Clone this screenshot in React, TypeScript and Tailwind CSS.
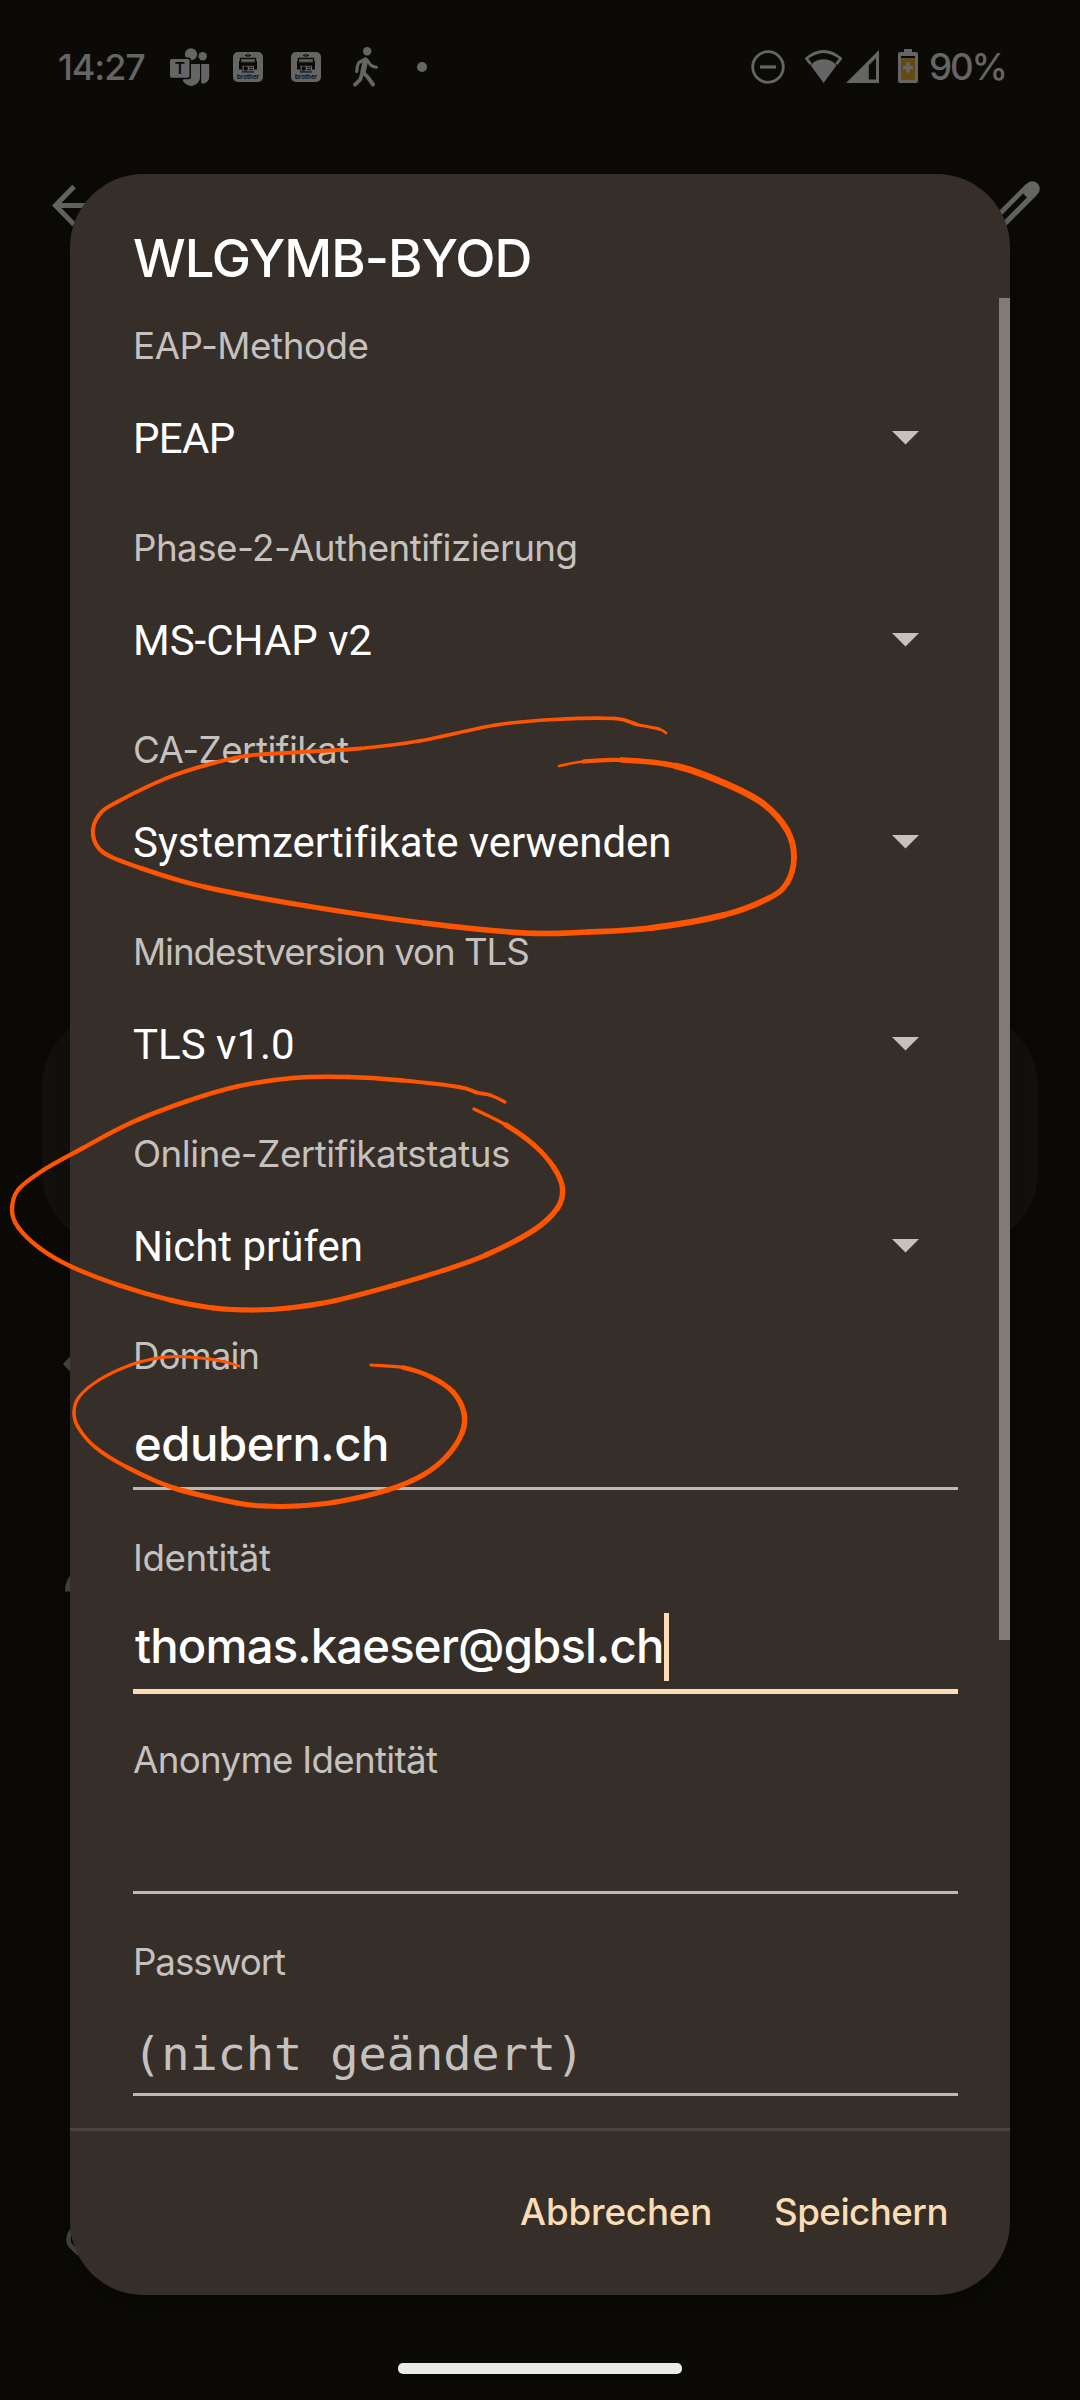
type Pt = [number, number, number];

const LABEL = "font-['Inter'] text-[36.75px] leading-[48px] text-[#c4c1be] whitespace-nowrap";

const selects = [
  { label: "EAP-Methode", ls: "tracking-[-0.45px]", value: "PEAP", vls: "tracking-[-0.7px]" },
  { label: "Phase-2-Authentifizierung", ls: "tracking-[-0.55px]", value: "MS-CHAP v2", vls: "tracking-normal" },
  { label: "CA-Zertifikat", ls: "tracking-[-0.52px]", value: "Systemzertifikate verwenden", vls: "tracking-[-0.05px]" },
  { label: "Mindestversion von TLS", ls: "tracking-[-1.08px]", value: "TLS v1.0", vls: "tracking-normal" },
  { label: "Online-Zertifikatstatus", ls: "tracking-[-0.48px]", value: "Nicht prüfen", vls: "tracking-normal" },
];

function SelectField({ label, ls, value, vls }: { label: string; ls: string; value: string; vls: string }) {
  return (
    <div className="h-[202px] shrink-0">
      <div className={`${LABEL} ${ls}`}>{label}</div>
      <div className="mt-[41px] flex h-14 items-center justify-between pr-[39px]">
        <span className={`font-['Roboto'] text-[42px] leading-[56px] whitespace-nowrap text-white ${vls}`}>{value}</span>
        <svg className="mb-[3px]" width="27" height="14" viewBox="0 0 27 14" fill="#c4c1be">
          <path d="M0 0h27L13.5 13.5z" />
        </svg>
      </div>
    </div>
  );
}

function StatusBar() {
  return (
    <div className="flex h-[134px] items-center pr-[77px] pl-[58px] text-[#656565]">
      <span className="w-[110px] font-['Inter'] text-[36px] leading-[44px] font-medium tracking-[-1.1px]">14:27</span>
      <svg width="44" height="42" viewBox="168 46 44 42" fill="#656565">
        <circle cx="202.7" cy="56.3" r="4.2" />
        <path d="M202 64h6.2q1 0 1 1v11.5q0 6-6 7.2q-2-.3-2-1.5V64z" />
        <circle cx="191" cy="54.3" r="6.1" />
        <path d="M184 64h16v12.500a9 9 0 0 1-17 4.500z" />
        <rect x="168.500" y="57.500" width="22.500" height="21.700" rx="2.500" fill="#0b0a06" />
        <rect x="170" y="59" width="19.500" height="18.700" rx="1.600" />
        <text x="179.800" y="74" textAnchor="middle" fontFamily="Inter" fontWeight="600" fontSize="15.500" fill="#0b0a06">T</text>
      </svg>
      <PrinterIcon className="ml-[20px]" />
      <PrinterIcon className="ml-[26px]" />
      <svg className="ml-[29px]" width="28" height="42" viewBox="350 46 28 42" fill="none" stroke="#656565" strokeLinecap="round" strokeLinejoin="round">
        <circle cx="366.200" cy="51.200" r="4.200" fill="#656565" stroke="none" />
        <path d="M364.500 59l-6.500 3.500q-1.800 2-2.200 9" strokeWidth="3.200" />
        <path d="M364.500 60.500L362 72" strokeWidth="5.500" />
        <path d="M366.500 60.500l3 4.500q2.500 2 6 2.300" strokeWidth="3" />
        <path d="M361.800 72l5.200 5.500l5 7" strokeWidth="4" />
        <path d="M360.800 74.500l-1.500 5l-5.300 5.200" strokeWidth="3.800" />
      </svg>
      <div className="ml-[38px] h-[10px] w-[10px] rounded-full bg-[#656565]" />
      <svg className="ml-auto" width="34" height="36" viewBox="0 0 34 36" fill="none" stroke="#656565" strokeWidth="2.800">
        <circle cx="17" cy="18" r="15.300" />
        <path d="M9 18h16" strokeWidth="3.200" />
      </svg>
      <svg className="ml-[19px]" width="76" height="36" viewBox="804 48 76 36" fill="#656565">
        <path d="M823.600 82L811.500 65.500q-.8-1.400 0-2.200q5-5 12.100-5t12.100 5q.8.800 0 2.200z" />
        <path d="M810.800 63.200l-4.300-5.700q17.100-14 34.200 0l-4.300 5.700" fill="none" stroke="#656565" strokeWidth="2.800" strokeLinejoin="round" />
        <path fillRule="evenodd" d="M879 49v33h-33zM876 57l-7.200 7.200V78.500h7.200z" />
      </svg>
      <svg className="ml-[18px]" width="20" height="36" viewBox="898 48 20 36">
        <path d="M904 48h8v3h4a2 2 0 0 1 2 2v27a2 2 0 0 1-2 2h-16a2 2 0 0 1-2-2V53a2 2 0 0 1 2-2h4z" fill="#656565" />
        <path d="M901 55h14v2h-14z" fill="#0b0a06" />
        <path d="M901 57h14v22h-14z" fill="#654a16" />
        <path d="M903 66.500h10M908 61.500v10" stroke="#656565" strokeWidth="3.400" />
      </svg>
      <span className="ml-[11px] w-[74px] font-['Inter'] text-[36.75px] leading-[44px] font-medium tracking-[-2.2px]">90%</span>
    </div>
  );
}

function PrinterIcon({ className }: { className: string }) {
  return (
    <svg className={className} width="32" height="32" viewBox="0 0 32 32">
      <rect x="1" y="1" width="30" height="30" rx="5" fill="#656565" />
      <path d="M13 4.500q3-1.800 6 0q-3 1.500-6 0z" fill="none" stroke="#0b0a06" strokeWidth="1" />
      <path d="M8.500 10V7.500h15V10" fill="none" stroke="#0b0a06" strokeWidth="1.400" />
      <path d="M7 10h18v8.500h-3v3H10v-3H7z" fill="#0b0a06" />
      <path d="M9 10.800h14" stroke="#656565" strokeWidth="1" />
      <rect x="10.500" y="14.800" width="11.500" height="5.600" fill="#656565" />
      <circle cx="13.700" cy="17.500" r="2.200" fill="#0b0a06" />
      <path d="M17 16.300h4M17 18.600h4" stroke="#0b0a06" strokeWidth="1" />
      <text x="5" y="28" fontFamily="Inter" fontSize="6.800" fontWeight="600" textLength="22" lengthAdjust="spacingAndGlyphs" fill="#0b0a06">brother</text>
    </svg>
  );
}

/* Remains of the settings screen that show around the dialog. */
function Backdrop() {
  return (
    <>
      <div className="absolute top-[1013px] left-[42px] h-[233px] w-[996px] rounded-[73px] bg-[#12110d]" />
      <svg className="absolute inset-0" width="1080" height="2400" viewBox="0 0 1080 2400" fill="none">
        <path d="M74 186.500L55.500 205.500L74 224.500M56 205.500H96" stroke="#656565" strokeWidth="5" />
        <path d="M1031.500 189.500L990 231" stroke="#656565" strokeWidth="15.500" />
        <path d="M1031.500 189.500l.8-.8" stroke="#656565" strokeWidth="15" strokeLinecap="round" />
        <path d="M1025 195.500L990 231" stroke="#0b0a06" strokeWidth="5.500" />
        <path d="M63 1364l7-7.500v15z" fill="#4a4845" />
        <path d="M65 1591.500q0-10 6-17v17z" fill="#4a4845" />
        <path d="M72 2230q-6 9-2 15l9 9" stroke="#4a4845" strokeWidth="4.500" />
      </svg>
    </>
  );
}

const strokes: Pt[][] = [
  [
    [559, 766, 2], [583.5, 761.5, 3.5], [622, 760, 5], [676, 766, 6.5], [724, 783, 6.5], [763, 803.5, 6.5], [787, 830, 6], [794, 857, 6],
    [787, 883, 5.5], [768, 898.5, 5.5], [724, 915, 6], [651, 928, 6], [588, 932, 5.5], [525, 933, 5.5], [423.5, 923, 5.5], [307, 906, 5],
    [205, 887, 5], [142, 868.5, 4.5], [104, 853, 4.5], [93, 835, 4], [99, 815, 4], [118, 801.5, 4], [167, 778, 4], [210, 764, 4],
    [249, 755.5, 4], [302, 752, 4], [360.5, 748.5, 4], [419, 741, 3.5], [496, 725, 3.5], [554, 719.5, 3.5], [615, 718.5, 4], [637, 724.5, 3.5],
    [659, 729, 3], [666, 733, 2.5],
  ],
  [
    [474, 1109, 2], [506, 1125, 5], [534, 1145, 5], [553.5, 1167, 5], [562.5, 1188, 5.5], [557.5, 1208, 5.5], [534, 1230, 5.5], [486, 1255, 5],
    [443, 1270.5, 5], [395, 1285, 5], [336, 1300.5, 5], [289, 1308, 5], [253, 1310, 5], [213.5, 1308, 5], [170, 1300, 4.8], [118.5, 1285, 4.5],
    [71, 1266.5, 4.5], [39.5, 1248, 4.5], [18, 1227, 4.3], [12, 1210, 4.3], [18, 1190, 4.3], [43.5, 1170, 4.3], [83, 1148, 4.3], [130.5, 1123, 4.5],
    [186, 1101.5, 4.5], [237, 1086.5, 4.5], [292.5, 1078, 4.5], [348, 1077, 4.5], [403, 1080.5, 4.3], [459, 1087, 4], [476.5, 1092.5, 4], [490, 1095, 3.5],
    [505, 1102, 3],
  ],
  [
    [371, 1365, 2.5], [403, 1367.5, 4], [431, 1377, 5], [453, 1392, 5], [464, 1413, 5.5], [462, 1433, 5.5], [447, 1456, 5], [423, 1475, 5],
    [387.5, 1490, 5], [336, 1502, 5], [296.5, 1506, 5], [265, 1506, 5], [237, 1503, 5], [174, 1488, 5], [126.5, 1467, 4], [95, 1447, 3.5],
    [78, 1427, 3.5], [74, 1412, 3.5], [79, 1397, 3.2], [99, 1380, 3.2], [130.5, 1365, 3.2], [158, 1358, 3], [178, 1356.5, 3], [209.5, 1359, 3],
    [225, 1362, 3], [239, 1366, 2.5],
  ],
];

/* Smooth pen strokes: Catmull-Rom segments, each with its own width. */
function Ink() {
  return (
    <svg className="pointer-events-none absolute inset-0" width="1080" height="2400" viewBox="0 0 1080 2400" fill="none" stroke="#ff5500" strokeLinecap="round">
      {strokes.map((p, s) =>
        p.slice(0, -1).map((a, i) => {
          const b = p[i + 1];
          const z = p[i - 1] ?? a;
          const c = p[i + 2] ?? b;
          const d = `M${a[0]} ${a[1]}C${a[0] + (b[0] - z[0]) / 6} ${a[1] + (b[1] - z[1]) / 6} ${b[0] - (c[0] - a[0]) / 6} ${b[1] - (c[1] - a[1]) / 6} ${b[0]} ${b[1]}`;
          return <path key={`${s}-${i}`} d={d} strokeWidth={(a[2] + b[2]) / 2} />;
        }),
      )}
    </svg>
  );
}

export default function App() {
  return (
    <div className="relative flex h-[2400px] w-[1080px] flex-col overflow-hidden bg-[#0b0a06]">
      <Backdrop />
      <StatusBar />
      <div className="relative mx-[70px] mt-[40px] flex h-[2121px] shrink-0 flex-col overflow-hidden rounded-[73.5px] bg-[#362e29] shadow-[0_12px_50px_rgba(0,0,0,0.25)]">
        <h1 className="px-[63px] pt-[52px] font-['Inter'] text-[52.5px] leading-[64px] font-medium tracking-[-1px] text-white">WLGYMB-BYOD</h1>
        <div className="relative mt-2 flex h-[1830px] shrink-0 flex-col overflow-hidden pt-[24px] pr-[52px] pl-[63px]">
          {selects.map((f) => (
            <SelectField key={f.label} {...f} />
          ))}
          <div className="h-[202px] shrink-0">
            <div className={`${LABEL} tracking-[-1px]`}>Domain</div>
            <div className="h-[110px] border-b-[3px] border-[#bdbab6] pt-[34px] pl-px font-['Inter'] text-[47.25px] leading-[60px] font-medium tracking-[-0.47px] text-white">edubern.ch</div>
          </div>
          <div className="h-[202px] shrink-0">
            <div className={`${LABEL} tracking-[-0.41px]`}>Identität</div>
            <div className="flex h-[112px] border-b-[5px] border-[#fbdcb4] pt-[31px] font-['Inter'] text-[47.25px] leading-[66px] font-medium text-white">
              <span className="w-[531px] pl-[2px] tracking-[-0.85px] whitespace-nowrap">thomas.kaeser@gbsl.ch</span>
              <span className="h-[68px] w-[5px] bg-[#fbdcb4]" />
            </div>
          </div>
          <div className="h-[202px] shrink-0">
            <div className={`${LABEL} tracking-[-0.7px]`}>Anonyme Identität</div>
            <div className="h-[110px] border-b-[3px] border-[#bdbab6]" />
          </div>
          <div className="h-[202px] shrink-0">
            <div className={`${LABEL} tracking-[-1.1px]`}>Passwort</div>
            <div className="h-[110px] border-b-[3px] border-[#bdbab6] pt-[38px] font-['DejaVu_Sans_Mono'] text-[47px] leading-[60px] tracking-[-0.1px] whitespace-nowrap text-[#c4c1be]">(nicht geändert)</div>
          </div>
          <div className="absolute top-0 right-0 h-[1342px] w-[11px] bg-[#7f7b75]" />
        </div>
        <div className="flex grow border-t-[3px] border-[#4a453f] pt-[57px] pl-[450px] font-['Inter'] text-[36.75px] leading-[48px] font-medium text-[#fbdcb4]">
          <span className="w-[254px] tracking-[-0.15px]">Abbrechen</span>
          <span className="tracking-[-0.55px]">Speichern</span>
        </div>
      </div>
      <div className="relative mt-[68px] h-[11px] w-[284px] self-center rounded-[5px] bg-[#ebebeb]" />
      <Ink />
    </div>
  );
}
